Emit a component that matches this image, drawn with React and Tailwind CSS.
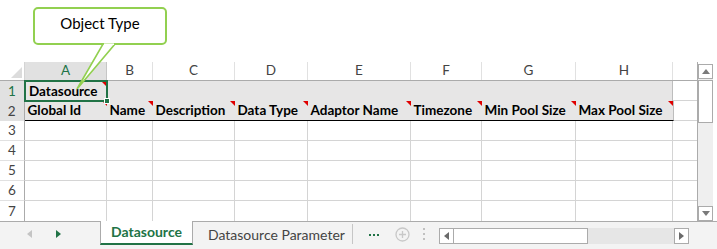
import React from "react";

const COLS = [
  { k: "A", w: "w-[82px]", h: "Global Id" },
  { k: "B", w: "w-[46px]", h: "Name" },
  { k: "C", w: "w-[82px]", h: "Description" },
  { k: "D", w: "w-[73px]", h: "Data Type" },
  { k: "E", w: "w-[103px]", h: "Adaptor Name" },
  { k: "F", w: "w-[71px]", h: "Timezone" },
  { k: "G", w: "w-[94px]", h: "Min Pool Size" },
  { k: "H", w: "w-[97px]", h: "Max Pool Size" },
];

function RedMark() {
  return (
    <span className="absolute right-0 top-0 h-0 w-0 border-l-[5px] border-t-[5px] border-l-transparent border-t-[#e00000]" />
  );
}

function Tri({ dir, color }) {
  const pts = dir === "up" ? "0,5 4,0 8,5" : dir === "down" ? "0,0 8,0 4,5" : dir === "left" ? "5,0 5,8 0,4" : "0,0 5,4 0,8";
  const w = dir === "up" || dir === "down" ? 8 : 5;
  const h = dir === "up" || dir === "down" ? 5 : 8;
  return (
    <svg width={w} height={h} viewBox={`0 0 ${w} ${h}`}>
      <polygon points={pts} fill={color} />
    </svg>
  );
}

export default function App() {
  const emptyRows = [3, 4, 5, 6, 7];
  return (
    <div className="relative h-[249px] w-[717px] overflow-hidden bg-white font-['Lato',sans-serif] text-[#222]">
      {/* top white space */}
      <div className="h-[62px]" />

      {/* grid + vertical scrollbar */}
      <div className="flex h-[159px]">
        <div className="flex w-[698px] flex-col border-r border-[#ababab]">
          {/* column headers */}
          <div className="flex h-[19px] border-b border-[#ababab]">
            <div className="relative w-[25px] border-r border-[#d4d4d4]">
              <span className="absolute bottom-[2px] right-[2px] h-0 w-0 border-b-[11px] border-l-[11px] border-b-[#dcdcdc] border-l-transparent" />
            </div>
            {COLS.map((c) => (
              <div
                key={c.k}
                className={`${c.w} flex items-center justify-center border-r text-[13.5px] leading-none ${
                  c.k === "A" ? "border-[#c6c6c6] bg-[#e1e1e1] text-[#217346]" : "border-[#e1e1e1] text-[#444]"
                }`}
              >
                {c.k}
              </div>
            ))}
            <div className="w-[24px]" />
          </div>

          {/* row 1 */}
          <div className="flex h-[20px]">
            <div className="flex w-[25px] items-center justify-center border-r border-[#ababab] bg-[#e1e1e1] text-[13.5px] text-[#217346]">1</div>
            <div className="relative flex w-[648px] items-center border-r border-[#bdbdbd] bg-[#e7e6e6] pl-[4px] text-[13.5px] font-bold text-black">
              Datasource
              <span className="absolute left-[77px] top-[1px] h-0 w-0 border-l-[5px] border-t-[5px] border-l-transparent border-t-[#e00000]" />
            </div>
            <div className="w-[24px] border-b border-[#d4d4d4]" />
          </div>

          {/* row 2 */}
          <div className="flex h-[20px]">
            <div className="flex w-[25px] items-center justify-center border-r border-[#ababab] bg-[#e1e1e1] text-[13.5px] text-[#444]">2</div>
            <div className="flex border-b border-r border-b-black border-r-[#bdbdbd] bg-[#e7e6e6]">
              {COLS.map((c) => (
                <div key={c.k} className={`${c.w} relative flex items-center whitespace-nowrap pl-[3px] text-[13.5px] font-bold text-black`}>
                  {c.h}
                  <RedMark />
                </div>
              ))}
            </div>
            <div className="w-[24px] border-b border-[#d4d4d4]" />
          </div>

          {/* empty rows */}
          {emptyRows.map((r) => (
            <div key={r} className="flex h-[20px]">
              <div
                className={`flex w-[25px] items-center justify-center border-r border-[#ababab] text-[13.5px] text-[#444] ${
                  r === 7 ? "" : "border-b border-b-[#e1e1e1]"
                }`}
              >
                {r}
              </div>
              {COLS.map((c) => (
                <div key={c.k} className={`${c.w} border-r border-[#d4d4d4] ${r === 7 ? "" : "border-b"}`} />
              ))}
              <div className={`w-[24px] border-[#d4d4d4] ${r === 7 ? "" : "border-b"}`} />
            </div>
          ))}
        </div>

        {/* vertical scrollbar */}
        <div className="flex w-[19px] flex-col pt-[2px]">
          <div className="flex h-[159px] w-[15px] flex-col bg-[#efefef]">
            <div className="flex h-[15px] items-center justify-center border border-[#ababab] bg-white">
              <Tri dir="up" color="#7a7a7a" />
            </div>
            <div className="mt-[1px] h-[43px] border border-[#ababab] bg-white" />
            <div className="flex-1" />
            <div className="flex h-[15px] items-center justify-center border border-[#ababab] bg-white">
              <Tri dir="down" color="#7a7a7a" />
            </div>
          </div>
        </div>
      </div>

      {/* sheet tab bar */}
      <div className="flex h-[28px] bg-[#f3f3f3]">
        <div className="flex w-[100px] items-start gap-[24px] border-t border-[#ababab] pl-[27px] pt-[8px]">
          <Tri dir="left" color="#c4c4c4" />
          <Tri dir="right" color="#217346" />
        </div>
        <div className="flex h-[24px] w-[93px] items-center justify-center border-x border-b-2 border-x-[#ababab] border-b-[#217346] bg-white pb-[1px] text-[14px] font-bold text-[#217346]">
          Datasource
        </div>
        <div className="flex flex-1 items-start border-t border-[#ababab] pt-[2px]">
          <div className="flex h-[20px] w-[160px] items-center border-r border-[#c6c6c6] pl-[15px] text-[14px] text-[#444]">
            Datasource Parameter
          </div>
          <div className="ml-[16px] mt-[10px] flex gap-[2px]">
            <span className="h-[2px] w-[2px] bg-[#217346]" />
            <span className="h-[2px] w-[2px] bg-[#217346]" />
            <span className="h-[2px] w-[2px] bg-[#217346]" />
          </div>
          <svg className="ml-[16px] mt-[3px]" width="15" height="15" viewBox="0 0 15 15">
            <circle cx="7.5" cy="7.5" r="6.5" fill="none" stroke="#c8c8c8" strokeWidth="1.3" />
            <path d="M7.5 4v7M4 7.5h7" stroke="#c8c8c8" strokeWidth="1.3" />
          </svg>
          <div className="ml-[13px] mt-[4px] flex flex-col gap-[3px]">
            <span className="h-[2px] w-[2px] bg-[#c0c0c0]" />
            <span className="h-[2px] w-[2px] bg-[#c0c0c0]" />
            <span className="h-[2px] w-[2px] bg-[#c0c0c0]" />
          </div>
          <div className="ml-[14px] mt-[4px] flex h-[16px] w-[250px] bg-[#e6e6e6]">
            <div className="flex w-[15px] items-center justify-center border border-[#ababab] bg-white">
              <Tri dir="left" color="#6a6a6a" />
            </div>
            <div className="w-[134px] border border-l-0 border-[#ababab] bg-white" />
            <div className="flex-1" />
            <div className="flex w-[15px] items-center justify-center border border-[#ababab] bg-white">
              <Tri dir="right" color="#6a6a6a" />
            </div>
          </div>
        </div>
      </div>

      {/* A1 selection */}
      <div className="pointer-events-none absolute left-[24px] top-[80px] h-[22px] w-[84px] border-2 border-[#217346]" />
      <div className="pointer-events-none absolute left-[104px] top-[98px] h-[6px] w-[6px] border border-white bg-[#217346]" />

      {/* callout */}
      <div className="absolute left-[33px] top-[7px] flex h-[38px] w-[134px] items-center justify-center rounded-[5px] border-2 border-[#92d050] bg-white pb-[6px] text-[15px] text-black">
        Object Type
      </div>
      <svg className="pointer-events-none absolute left-0 top-0" width="200" height="100" viewBox="0 0 200 100">
        <polygon points="103,44 115,44 77,89" fill="white" stroke="#92d050" strokeWidth="1.6" strokeLinejoin="miter" />
        <line x1="104" y1="44.2" x2="114" y2="44.2" stroke="white" strokeWidth="1.6" />
      </svg>
    </div>
  );
}
